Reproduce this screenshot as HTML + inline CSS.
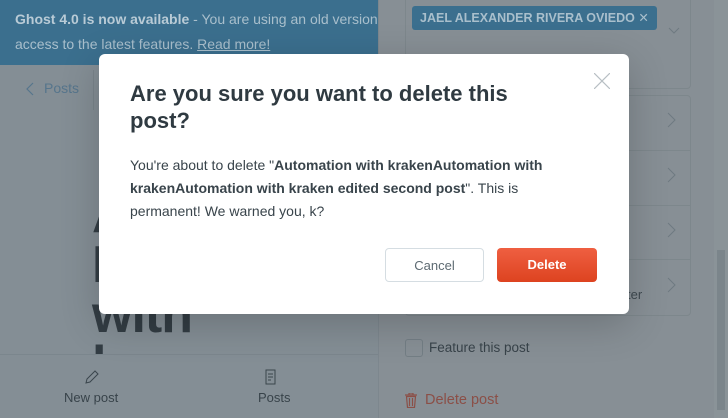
<!DOCTYPE html>
<html><head><style>
html,body{margin:0;width:728px;height:418px;overflow:hidden}
body{position:relative;font-family:"Liberation Sans","DejaVu Sans",sans-serif;background:#848e95}
.abs{position:absolute}
.banner{left:0;top:0;width:378px;height:65px;background:#3b6f8e;color:#a9bfcc;font-size:14px;line-height:25px;padding:7px 0 0 15px;box-sizing:border-box;white-space:nowrap;overflow:hidden}
.right{left:378px;top:0;width:336px;height:418px;background:#878f95;border-left:1px solid #7d878e}
.sb{left:714px;top:0;width:14px;height:418px;background:#8a9398}
.box{border:1px solid #7d878c;border-radius:4px}
.chev{position:absolute}
.modal{left:99px;top:54px;width:530px;height:260px;background:#fff;border-radius:6px;box-shadow:0 10px 40px rgba(0,0,0,.2)}
h1{position:absolute;left:31px;top:26px;margin:0;font-size:22px;line-height:27px;color:#2f3a41;font-weight:bold;width:420px}
.msg{position:absolute;left:31px;top:100px;width:460px;font-size:14px;line-height:23px;color:#39444b}
.btn{position:absolute;top:194px;height:34px;border-radius:4px;font-size:13px;text-align:center;line-height:34px}
</style></head><body>
<div class="abs banner"><b style="color:#b9cbd6">Ghost 4.0 is now available</b> - You are using an old version<br>access to the latest features. <u>Read more!</u></div>
<svg class="abs" style="left:26px;top:82px" width="8" height="14"><path d="M7 1L1 7l6 6" fill="none" stroke="#56758c" stroke-width="1.2"/></svg>
<div class="abs" style="left:44px;top:80px;color:#56758c;font-size:14px">Posts</div>
<div class="abs" style="left:93px;top:70px;width:1px;height:40px;background:#7a848b"></div>
<div class="abs" style="left:92px;top:190px;color:#333d44;font-size:52px;font-weight:bold;line-height:50px;letter-spacing:-1px">A<br>I<br>with<br>k</div>
<div class="abs" style="left:0;top:354px;width:378px;height:64px;background:#848e95;border-top:1px solid #7b868d"></div>
<div class="abs" style="left:64px;top:390px;color:#38434a;font-size:13px">New post</div>
<svg class="abs" style="left:84px;top:369px" width="16" height="16"><path d="M2 14l1-4 8-8 3 3-8 8z" fill="none" stroke="#3a454c" stroke-width="1"/></svg>
<div class="abs" style="left:258px;top:390px;color:#38434a;font-size:13px">Posts</div>
<svg class="abs" style="left:265px;top:369px" width="16" height="16"><path d="M1 1h9v14H1z M3 5h5M3 8h5M3 11h3" fill="none" stroke="#3a454c" stroke-width="1"/></svg>
<div class="abs right">
 <div class="abs box" style="left:26px;top:-5px;width:284px;height:92px"></div>
 <div class="abs" style="left:33px;top:6px;height:24px;background:#3b6f8e;color:#a9bfcc;font-size:12.5px;font-weight:bold;line-height:24px;padding:0 8px;border-radius:3px">JAEL ALEXANDER RIVERA OVIEDO ✕</div>
 <svg class="chev" style="left:289px;top:27px" width="12" height="8"><path d="M1 1l5 5 5-5" fill="none" stroke="#6f7a81"/></svg>
 <div class="abs box" style="left:26px;top:95px;width:284px;height:219px"></div>
 <div class="abs" style="left:27px;top:150px;width:284px;height:1px;background:#7d878c"></div>
 <div class="abs" style="left:27px;top:205px;width:284px;height:1px;background:#7d878c"></div>
 <div class="abs" style="left:27px;top:259px;width:284px;height:1px;background:#7d878c"></div>
 <svg class="chev" style="left:288px;top:112px" width="9" height="16"><path d="M1 1l7 7-7 7" fill="none" stroke="#6f7a81"/></svg>
 <svg class="chev" style="left:288px;top:167px" width="9" height="16"><path d="M1 1l7 7-7 7" fill="none" stroke="#6f7a81"/></svg>
 <svg class="chev" style="left:288px;top:222px" width="9" height="16"><path d="M1 1l7 7-7 7" fill="none" stroke="#6f7a81"/></svg>
 <svg class="chev" style="left:288px;top:277px" width="9" height="16"><path d="M1 1l7 7-7 7" fill="none" stroke="#6f7a81"/></svg>
 <div class="abs" style="left:248px;top:287px;color:#3f4a51;font-size:13px">ter</div>
 <div class="abs" style="left:26px;top:339px;width:16px;height:16px;border:1px solid #737e85;border-radius:3px"></div>
 <div class="abs" style="left:50px;top:340px;color:#38434a;font-size:13.5px">Feature this post</div>
 <svg class="abs" style="left:26px;top:393px" width="12" height="15"><path d="M0 2h12M4 2V0h4v2M1.5 3.5h9l-1 11h-7z M4.5 5v8M7.5 5v8" fill="none" stroke="#8b4f47" stroke-width="1.2"/></svg>
 <div class="abs" style="left:46px;top:392px;color:#8b4f47;font-size:14.5px">Delete post</div>
</div>
<div class="abs sb"><div class="abs" style="left:3px;top:250px;width:8px;height:160px;background:#7b858b"></div></div>
<div class="abs modal">
 <svg class="abs" style="left:495px;top:19px" width="16" height="16"><path d="M0 0l16 16M16 0L0 16" stroke="#b8bfc4" stroke-width="1.2"/></svg>
 <h1>Are you sure you want to delete this post?</h1>
 <div class="msg">You're about to delete "<b>Automation with krakenAutomation with krakenAutomation with kraken edited second post</b>". This is permanent! We warned you, k?</div>
 <div class="btn" style="left:286px;width:99px;border:1px solid #d5dde2;color:#5d6a72;box-sizing:border-box">Cancel</div>
 <div class="btn" style="left:398px;width:100px;background:linear-gradient(#ef5f41,#dd4320);color:#fff;font-weight:bold">Delete</div>
</div>
</body></html>
